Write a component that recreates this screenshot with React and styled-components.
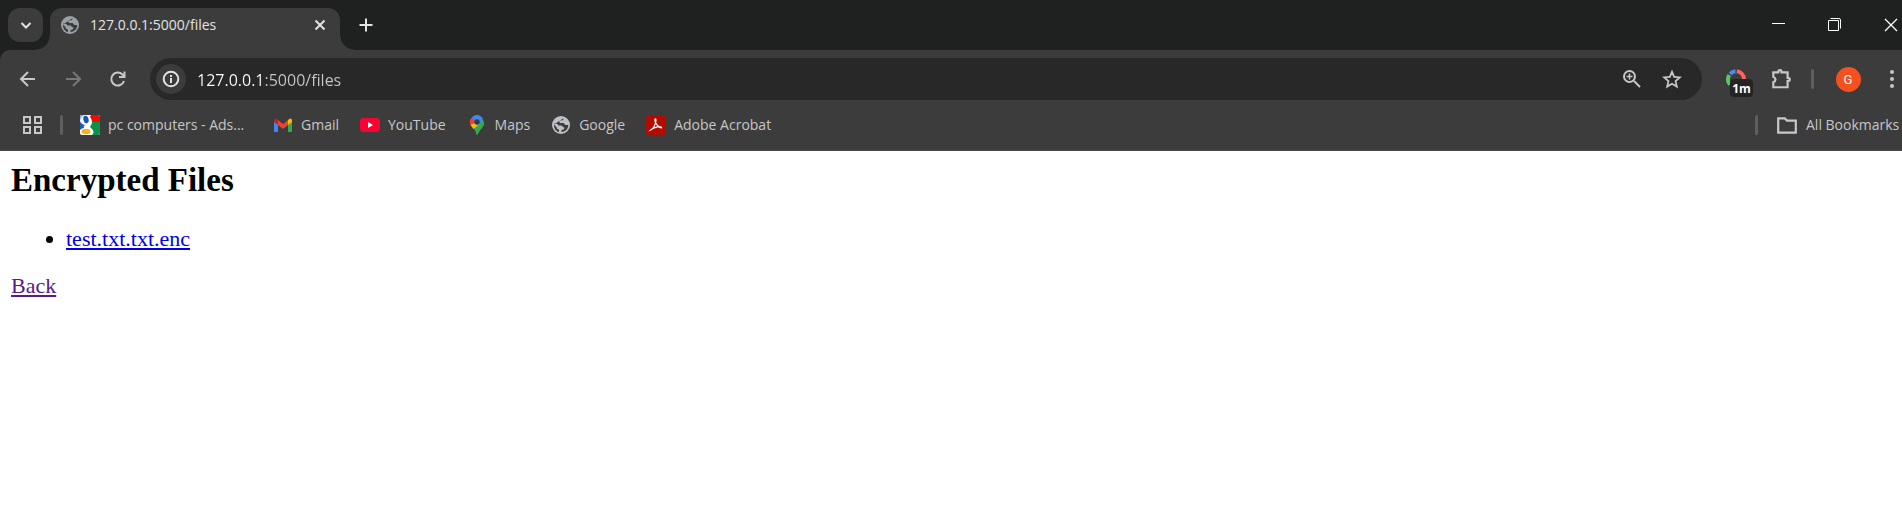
import React from "react";
import styled, { createGlobalStyle } from "styled-components";

const ui = '"Open Sans", "Noto Sans", sans-serif';

const GlobalStyle = createGlobalStyle`
  * { box-sizing: border-box; }
  body { margin: 0; background: #fff; }
  svg { display: block; flex: none; overflow: visible; }
`;

const Browser = styled.div`
  display: flex;
  flex-direction: column;
  min-height: 100vh;
  overflow: hidden;
`;

const TabStrip = styled.header`
  display: flex;
  align-items: flex-end;
  height: 50px;
  padding-left: 8px;
  background: #1f2120;
`;

const PlainButton = styled.button`
  display: flex;
  flex: none;
  align-items: center;
  justify-content: center;
  padding: 0;
  border: 0;
  background: none;
  color: ${(p) => p.$color || "#c7c7c7"};
  width: ${(p) => p.$width || 45}px;
  height: ${(p) => p.$height || 34}px;
`;

const TabSearch = styled(PlainButton)`
  align-self: center;
  margin-right: 7px;
  border-radius: 12px;
  background: #3c3c3c;
`;

const Tab = styled.div`
  position: relative;
  display: flex;
  align-items: center;
  width: 290px;
  height: 42px;
  padding: 0 5px 8px 10px;
  border-radius: 12px 12px 0 0;
  background: #3c3c3c;
  &::before,
  &::after {
    content: "";
    position: absolute;
    bottom: 0;
    width: 14px;
    height: 14px;
  }
  &::before {
    right: 100%;
    background: radial-gradient(circle at 0 0, transparent 13px, #3c3c3c 14px);
  }
  &::after {
    left: 100%;
    background: radial-gradient(circle at 100% 0, transparent 13px, #3c3c3c 14px);
  }
`;

const TabTitle = styled.span`
  flex: 1;
  margin-left: 10px;
  font: 14px/20px ${ui};
  color: #e3e3e3;
`;

const WindowControls = styled.div`
  display: flex;
  align-self: center;
  margin-left: auto;
  margin-right: -17px;
`;

const Chrome = styled.div`
  background: #1f2120;
`;

const Panel = styled.div`
  height: 101px;
  border-bottom: 1px solid #4a4a4a;
  border-top-left-radius: 10px;
  background: #3c3c3c;
`;

const Toolbar = styled.nav`
  display: flex;
  align-items: center;
  height: 50px;
  padding: 8px 0 0 5px;
`;

const Omnibox = styled.div`
  display: flex;
  flex: 1;
  align-items: center;
  height: 42px;
  margin: 0 11px 0 10px;
  padding: 0 10px 0 6px;
  border-radius: 21px;
  background: #282828;
`;

const InfoButton = styled(PlainButton)`
  border-radius: 50%;
  background: #3c3c3c;
`;

const Address = styled.input`
  flex: 1;
  min-width: 0;
  height: 30px;
  margin-left: 11px;
  padding: 2px 0 0;
  border: 0;
  outline: 0;
  font: 16px/24px ${ui};
  color: transparent;
  caret-color: #fff;
  background: linear-gradient(90deg, #fff 66px, #c7c7c7 66px);
  background-clip: text;
`;

const Divider = styled.span`
  flex: none;
  width: 3px;
  height: 20px;
  margin-left: ${(p) => p.$gap || 0}px;
  border-radius: 2px;
  background: #5e5e5e;
`;

const Extension = styled(PlainButton)`
  position: relative;
`;

const Badge = styled.span`
  position: absolute;
  left: 17px;
  top: 17px;
  width: 23px;
  height: 18px;
  border-radius: 4px;
  background: #242424;
  color: #fff;
  font: bold 12px/20px ${ui};
  text-align: center;
`;

const Avatar = styled.span`
  width: 25px;
  height: 25px;
  border-radius: 50%;
  background: #f4511e;
  color: #fff;
  font: 13px/25px Roboto, sans-serif;
  text-align: center;
`;

const Bookmarks = styled.nav`
  display: flex;
  align-items: center;
  height: 50px;
  padding-left: 22px;
`;

const Bookmark = styled.a`
  display: flex;
  flex: none;
  align-items: center;
  gap: 8px;
  min-width: ${(p) => p.$minWidth || 0}px;
  margin-left: ${(p) => p.$gap || 21}px;
  font: 14px/20px ${ui};
  color: #c7c7c7;
  text-decoration: none;
  white-space: nowrap;
`;

const Spacer = styled.span`
  flex: 1;
`;

const Page = styled.main`
  padding: 10px 11px;
  color: #000;
  font: 22px/25px "Liberation Serif", serif;
`;

const Heading = styled.h2`
  margin: 0 0 27px;
  font-size: 33px;
  line-height: 38px;
`;

const FileList = styled.ul`
  margin: 0 0 22px;
  padding-left: 55px;
`;

const PageLink = styled.a`
  color: ${(p) => (p.$visited ? "#551a8b" : "#0000ee")};
  text-decoration: underline;
`;

const Line = ({ size = 20, d, width = 2, children }) => (
  <svg width={size} height={size} viewBox="0 0 20 20" fill="none" stroke="currentColor" strokeWidth={width} aria-hidden="true">
    {d && <path d={d} />}
    {children}
  </svg>
);

const Globe = ({ color }) => (
  <svg width="20" height="20" viewBox="0 0 20 20" aria-hidden="true">
    <circle cx="10" cy="10" r="9" fill={color} />
    <path
      d="M12.500 3.200C12.500 5.500 11 5.500 9.500 5.500 8 5.500 8 7.500 9.500 8h2.500c1.500 0 1.500 2 3 2h2.300C17.300 14 14 17 10.500 17v-2c2 0 3-1 3-2.500-2 0-2-2-3.500-2H7.500C6.500 8.500 4.500 8.500 3.300 8.500 2 12.500 5 16.500 8 17v-2.500c-1.500 0-2.500-1-2.500-2.500L3 9.500z"
      fill="#3c3c3c"
    />
  </svg>
);

const OldGoogle = () => (
  <svg width="20" height="20" viewBox="0 0 20 20" aria-hidden="true">
    <rect width="20" height="20" rx="2" fill="#fff" />
    <path d="M11 0h7q2 0 2 2v5h-8q0-3-2-5z" fill="#f10b00" />
    <path d="M12 7h8v11q0 2-2 2h-6q3-3 0-6-3-2-1-4 1-1 1-3z" fill="#0c9146" />
    <path d="M0 6q1 3 5 4-2 1-1 3-2 0-4 2z" fill="#2459b7" />
    <path d="M0 1v5q1-4 4-6H1q-1 0-1 1z" fill="#8fb0e6" />
    <ellipse cx="6" cy="4.500" rx="2.600" ry="3.800" transform="rotate(-15 6 4.500)" fill="#1754bb" />
    <ellipse cx="6" cy="16.500" rx="4.500" ry="2.700" fill="#f1b51c" />
  </svg>
);

const Gmail = () => (
  <svg width="20" height="20" viewBox="0 0 20 20" aria-hidden="true">
    <path d="M1 6l4 3v8H2q-1 0-1-1z" fill="#4285f4" />
    <path d="M15 9l4-3v10q0 1-1 1h-3z" fill="#34a853" />
    <path d="M5 5l5 4 5-4v5l-5 4-5-4z" fill="#ea4335" />
    <path d="M1 5q1-3 4 0v5L1 7z" fill="#c5221f" />
    <path d="M15 5q3-3 4 0v2l-4 3z" fill="#fbbc04" />
  </svg>
);

const YouTube = () => (
  <svg width="20" height="20" viewBox="0 0 20 20" aria-hidden="true">
    <rect y="3" width="20" height="14" rx="4" fill="#ff0033" />
    <path d="M8 7l5 3-5 3z" fill="#fff" />
  </svg>
);

const Maps = () => (
  <svg width="20" height="20" viewBox="0 0 20 20" aria-hidden="true">
    <path d="M10 20c-1 0-1-4-3-6-2-3-4-4-4-7l5-5 8 3c2 3 1 6-1 8-3 3-4 7-5 7z" fill="#34a853" />
    <path d="M3.500 10l5-6 4 5-6 5z" fill="#fbbc04" />
    <path d="M3.500 10q-2-4 1-7l5 4z" fill="#ea4335" />
    <path d="M4.500 3Q6.500 0 10 0q4 0 6 4l-5 6-2-4z" fill="#4285f4" />
    <circle cx="10" cy="7" r="2.700" fill="#263c62" />
  </svg>
);

const Acrobat = () => (
  <svg width="20" height="20" viewBox="0 0 20 20" aria-hidden="true">
    <rect width="20" height="20" rx="4" fill="#b30b00" />
    <path d="M4.300 15.300c2.500-.8 5.700-6 5.700-10 0-1.800-1.300-1.800-1.200 0 .2 3 4 7.500 6.700 7.500.8-1.800-7.700-1.300-11.200 2.500z" fill="none" stroke="#fff" strokeWidth="1.200" />
  </svg>
);

const bookmarks = [
  { label: "pc computers - Ads...", icon: <OldGoogle />, gap: 17, minWidth: 172 },
  { label: "Gmail", icon: <Gmail /> },
  { label: "YouTube", icon: <YouTube /> },
  { label: "Maps", icon: <Maps /> },
  { label: "Google", icon: <Globe color="#bdc1c6" /> },
  { label: "Adobe Acrobat", icon: <Acrobat /> },
];

export default function App() {
  return (
    <Browser>
      <GlobalStyle />
      <TabStrip>
        <TabSearch $width={35} aria-label="Search tabs" $color="#e3e3e3">
          <Line d="M5.500 8l4.500 4.500L14.500 8" />
        </TabSearch>
        <Tab>
          <Globe color="#9aa0a6" />
          <TabTitle>127.0.0.1:5000/files</TabTitle>
          <PlainButton $width={30} $color="#e3e3e3" aria-label="Close tab">
            <Line d="M5.500 5.500l9 9m0-9l-9 9" />
          </PlainButton>
        </Tab>
        <PlainButton $width={52} $height={50} $color="#e3e3e3" aria-label="New tab">
          <Line d="M10 3.500v13M3.500 10h13" />
        </PlainButton>
        <WindowControls>
          <PlainButton $width={57} $color="#fff" aria-label="Minimize">
            <Line width={1} d="M4 8.500h13" />
          </PlainButton>
          <PlainButton $width={56} $color="#fff" aria-label="Restore">
            <Line width={1} d="M4.500 5.500h10v10h-10zM6.500 3.500H15q1.500 0 1.500 1.500v8.500" />
          </PlainButton>
          <PlainButton $width={57} $color="#fff" aria-label="Close window">
            <Line width={1.3} d="M4 4l12 12m0-12L4 16" />
          </PlainButton>
        </WindowControls>
      </TabStrip>
      <Chrome>
        <Panel>
          <Toolbar>
            <PlainButton aria-label="Back">
              <Line d="M17 10H4M10 3l-7 7 7 7" />
            </PlainButton>
            <PlainButton $color="#777" aria-label="Forward">
              <Line d="M3 10h13M10 3l7 7-7 7" />
            </PlainButton>
            <PlainButton aria-label="Reload">
              <Line d="M16 12a6.500 6.500 0 1 1-1.500-6.500L16.500 8M16.500 2.500V8H11" />
            </PlainButton>
            <Omnibox>
              <InfoButton $width={30} $height={30} $color="#e3e3e3" aria-label="Site information">
                <Line>
                  <circle cx="10" cy="10" r="7.300" />
                  <path d="M10 9v5M10 6v2" />
                </Line>
              </InfoButton>
              <Address aria-label="Address" defaultValue="127.0.0.1:5000/files" />
              <PlainButton $width={40} aria-label="Zoom">
                <Line>
                  <circle cx="7.500" cy="7.500" r="5.500" />
                  <path d="M12 12l6 6" />
                  <path d="M7.500 4.500v6M4.500 7.500h6" strokeWidth="1.600" />
                </Line>
              </PlainButton>
              <PlainButton $width={40} aria-label="Bookmark this page">
                <Line width={1.8} d="M10 2.800l2.200 5.100 5.600.5-4.200 3.700 1.200 5.500-4.800-2.900-4.800 2.900 1.200-5.500-4.200-3.700 5.600-.5z" />
              </PlainButton>
            </Omnibox>
            <Extension aria-label="Time tracker">
              <svg width="20" height="20" viewBox="0 0 20 20" fill="none" strokeWidth="4" aria-hidden="true">
                <path d="M4 15.500A8 8 0 0 1 3.300 6" stroke="#5bc466" />
                <path d="M4.200 4.800A8 8 0 0 1 9.500 2.200" stroke="#3b8ff5" />
                <path d="M10.800 2.200A8 8 0 0 1 18 10" stroke="#ff625f" />
              </svg>
              <Badge>1m</Badge>
            </Extension>
            <PlainButton aria-label="Extensions">
              <Line size={22} d="M3 4h4.500q0-2 1.500-2t1.500 2H16v5q2 0 2 1.500T16 12v5.500H3V13q2-1 2-2.500T3 8z" />
            </PlainButton>
            <Divider $gap={8} />
            <PlainButton $width={68} aria-label="Profile">
              <Avatar>G</Avatar>
            </PlainButton>
            <PlainButton $width={20} aria-label="Menu">
              <svg width="20" height="20" viewBox="0 0 20 20" fill="currentColor" aria-hidden="true">
                <circle cx="10" cy="3" r="2" /><circle cx="10" cy="10" r="2" /><circle cx="10" cy="17" r="2" />
              </svg>
            </PlainButton>
          </Toolbar>
          <Bookmarks>
            <PlainButton $width={20} aria-label="Apps">
              <Line d="M2 2h6v6H2zM13 2h6v6h-6zM2 12h6v6H2zM13 12h6v6h-6z" />
            </PlainButton>
            <Divider $gap={18} />
            {bookmarks.map(({ label, icon, gap, minWidth }) => (
              <Bookmark key={label} href="#" $gap={gap} $minWidth={minWidth}>
                {icon}
                {label}
              </Bookmark>
            ))}
            <Spacer />
            <Divider />
            <Bookmark href="#" $gap={18} $minWidth={126}>
              <Line size={22} d="M2 4h6l2 2h8v11H2z" />
              All Bookmarks
            </Bookmark>
          </Bookmarks>
        </Panel>
      </Chrome>
      <Page>
        <Heading>Encrypted Files</Heading>
        <FileList>
          <li><PageLink href="#">test.txt.txt.enc</PageLink></li>
        </FileList>
        <PageLink href="#" $visited>Back</PageLink>
      </Page>
    </Browser>
  );
}
